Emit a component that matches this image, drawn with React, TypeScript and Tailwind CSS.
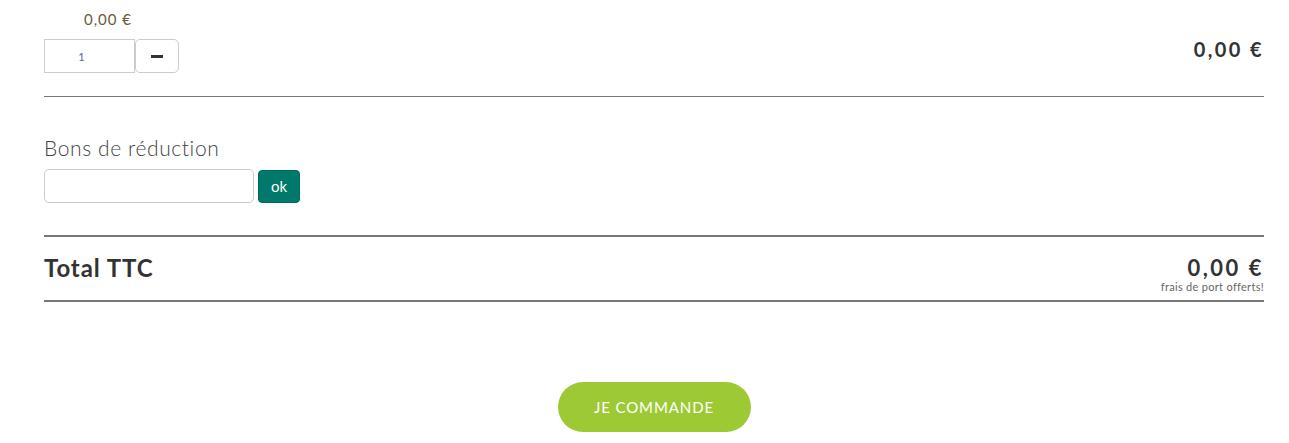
export default function App() {
  return (
    <div className="bg-white w-[1289px] h-[443px] overflow-hidden text-[#333]" style={{ fontFamily: "Lato, 'Noto Sans', sans-serif" }}>
      <div className="mx-[44px] w-[1220px]">
        {/* ligne produit */}
        <div className="flex items-end justify-between h-[73px]">
          <div className="flex flex-col">
            <div className="pl-[40px] text-[15px] tracking-[1px] text-[#6b5a3a] pt-[10px] leading-[18px]">0,00 €</div>
            <div className="flex mt-[11px]">
              <input
                defaultValue="1"
                className="w-[91px] h-[34px] border border-[#ccc] text-center pr-[16px] text-[11px] text-[#4a6a8a] outline-none"
              />
              <button className="w-[44px] h-[34px] border border-[#ccc] rounded-[5px] bg-white flex items-center justify-center">
                <span className="block w-[12px] h-[3px] bg-[#333]" />
              </button>
            </div>
          </div>
          <div className="text-[20px] font-bold pb-[9px] tracking-[2.4px]">0,00 €</div>
        </div>
        <div className="mt-[23px] h-px bg-[#777]" />

        {/* bons de réduction */}
        <div className="mt-[39px] text-[21px] font-light leading-[24px] tracking-[0.6px] text-[#444]">Bons de réduction</div>
        <div className="flex items-center mt-[9px] gap-[4px]">
          <input className="w-[210px] h-[34px] border border-[#ccc] rounded-[5px] outline-none" />
          <button className="w-[42px] h-[33px] bg-[#00796b] text-white text-[15px] rounded-[4px] border border-[#00695c]">ok</button>
        </div>

        {/* total */}
        <div className="mt-[32px] h-[2px] bg-[#777]" />
        <div className="flex justify-between items-start h-[63px]">
          <div className="text-[24px] font-bold mt-[18px] leading-[26px] tracking-[0.9px]">Total TTC</div>
          <div className="flex flex-col items-end mt-[19px]">
            <div className="text-[22px] font-bold leading-[24px] tracking-[2.5px]">0,00 €</div>
            <div className="text-[11px] text-[#666] leading-[12px] mt-[1px] tracking-[0.3px]">frais de port offerts!</div>
          </div>
        </div>
        <div className="h-[2px] bg-[#777]" />

        {/* commander */}
        <div className="flex justify-center mt-[80px]">
          <button className="w-[193px] h-[50px] rounded-full bg-[#9dc935] text-white text-[15px] tracking-[0.9px]">JE COMMANDE</button>
        </div>
      </div>
    </div>
  );
}
